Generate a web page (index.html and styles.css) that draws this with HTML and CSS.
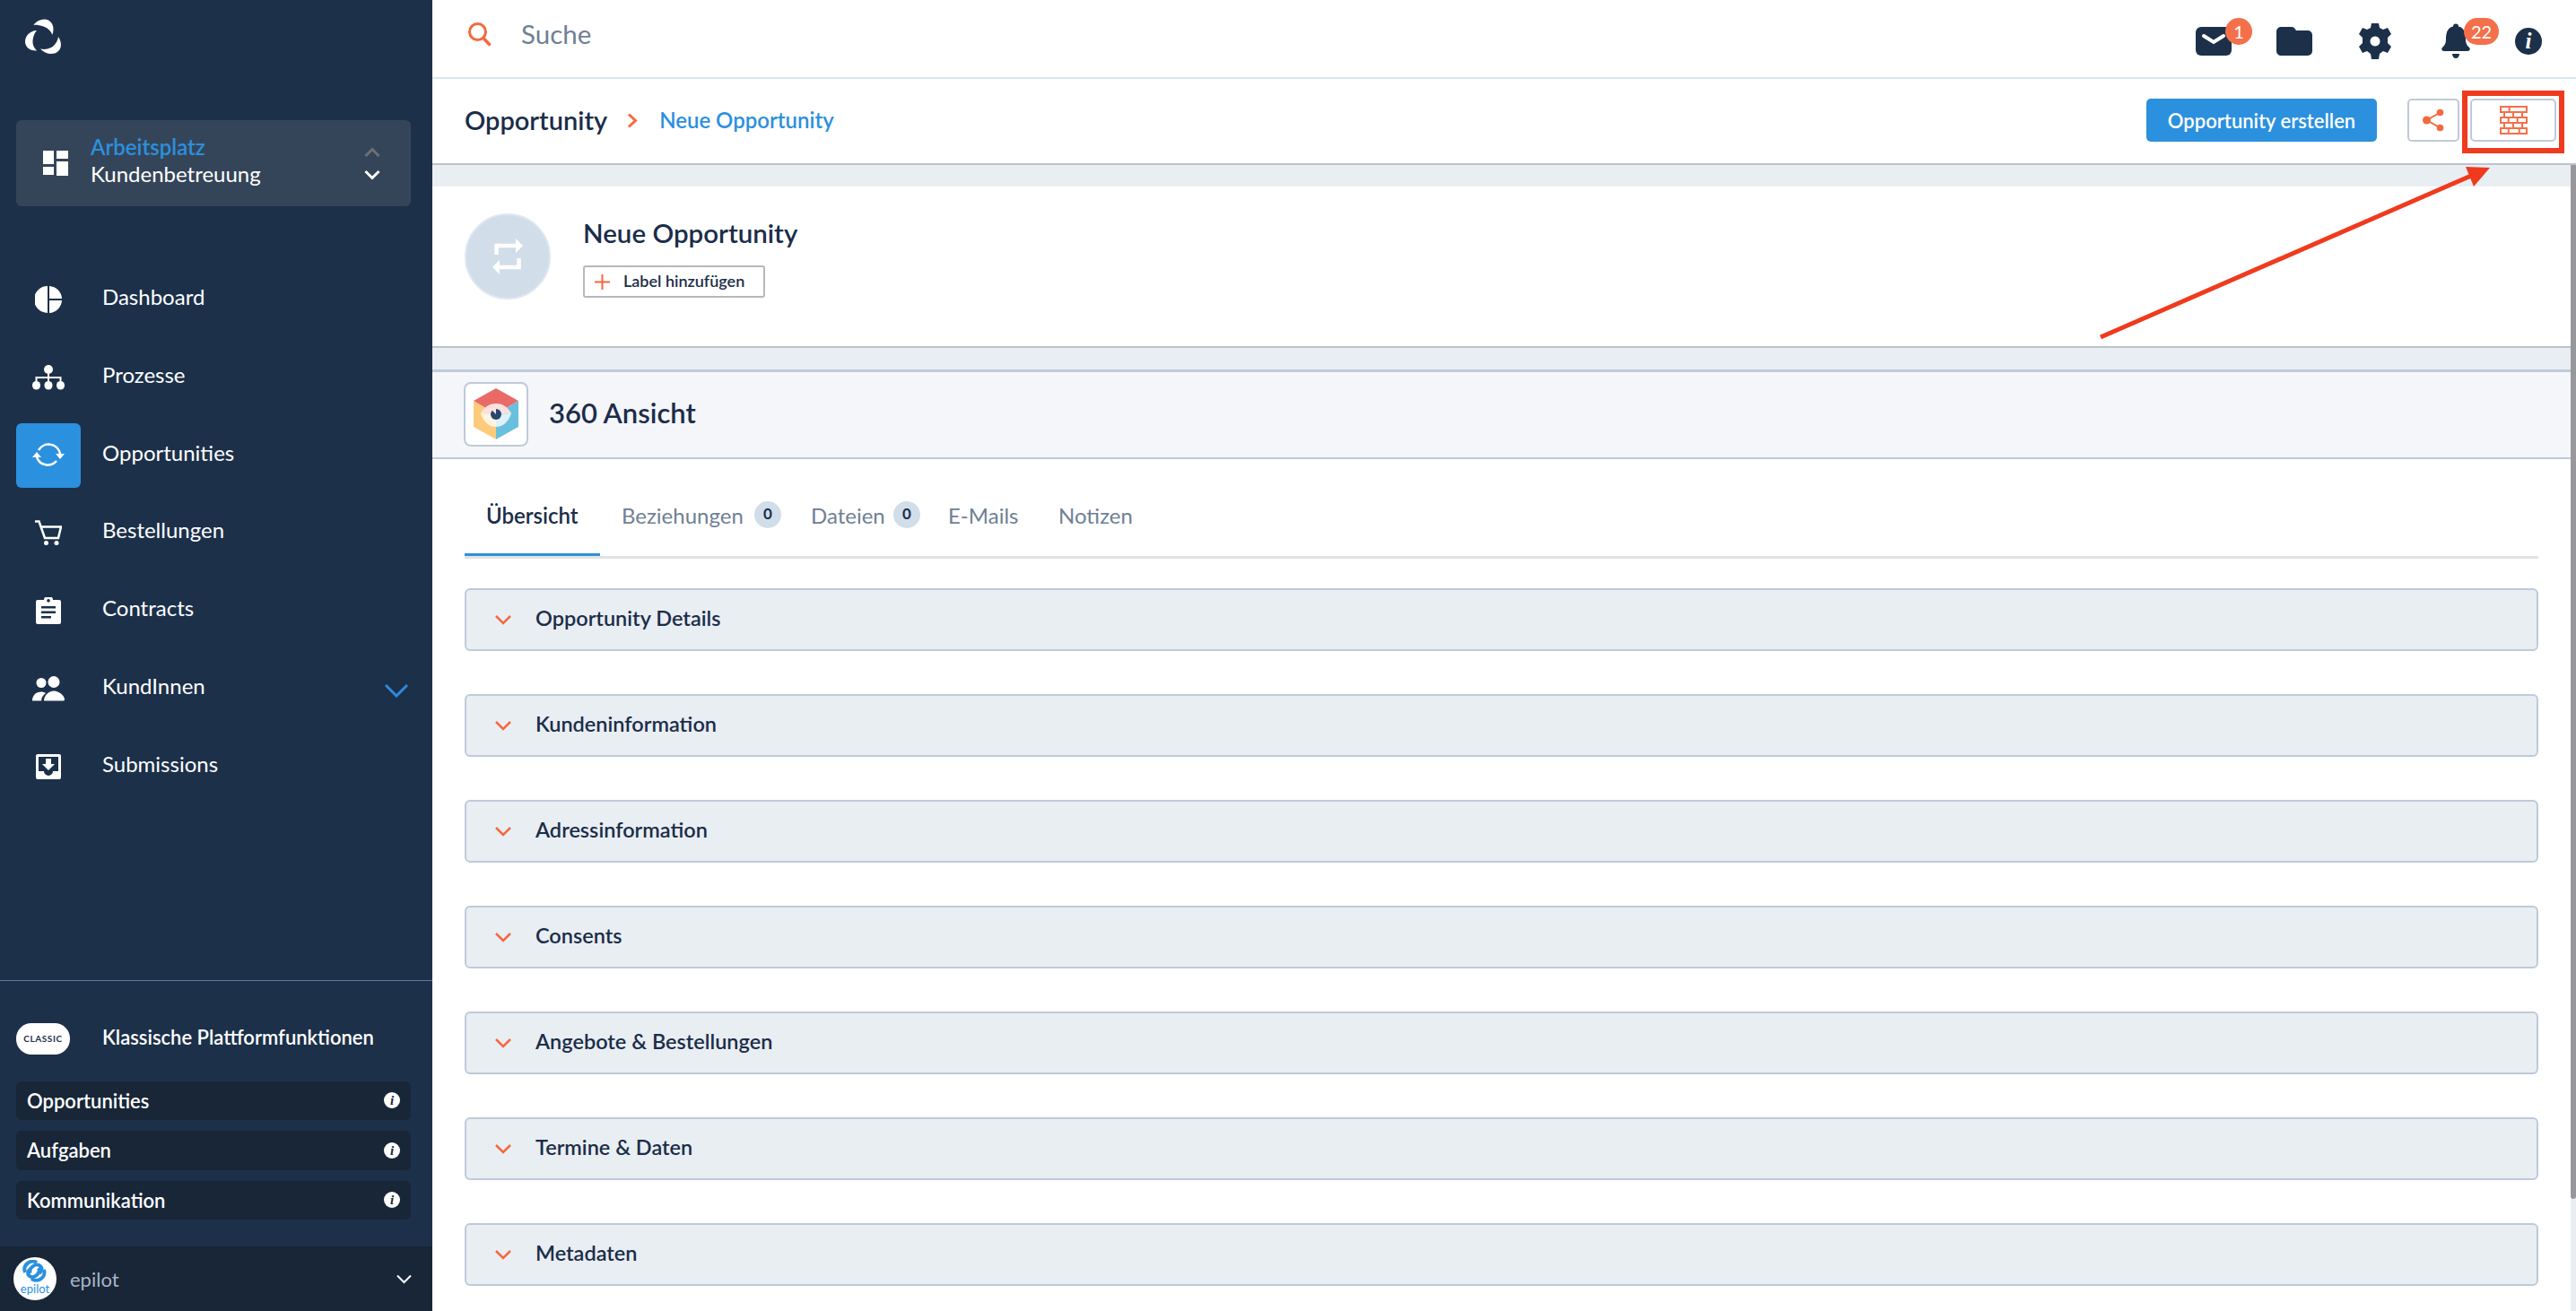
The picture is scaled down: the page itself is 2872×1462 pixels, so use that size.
FILE: index.html
```html
<!DOCTYPE html>
<html lang="de">
<head>
<meta charset="utf-8">
<title>Neue Opportunity</title>
<link rel="stylesheet" href="styles.css">
</head>
<body>
<div class="app">
  <aside class="sidebar">
    <div class="logo-area">
      <svg class="logo" width="42" height="40" viewBox="0 0 42 40"><g fill="#fff"><path d="M9.300 6.700C14 1 21-1 26 1.500C31 4 33 11 30.300 18C29 13.500 25 10 20.500 8.500C16.500 7 13 6.500 9.300 6.700Z"/><path d="M13 13C6 13.500.5 18 0 25C-.3 31 5 36 13 35.500C9.500 32 8 28 8.500 24C9 19.500 10.500 15.500 13 13Z"/><path d="M17 33.500C21 38 27 40 33 38.500C39 36.500 43 29 37 20C36 25.500 33 30 29 32C25 34 21 34.500 17 33.500Z"/></g></svg>
    </div>
    <div class="workspace">
      <svg class="ws-icon" width="28" height="28" viewBox="0 0 28 28"><path fill="#fff" d="M0 0h12v15H0zM15 0h13v9H15zM15 12h13v16H15zM0 18h12v9H0z"/></svg>
      <div class="ws-text"><div class="ws-title">Arbeitsplatz</div><div class="ws-sub">Kundenbetreuung</div></div>
      <div class="ws-carets">
        <svg width="18" height="12" viewBox="0 0 18 12"><path d="M1.500 10L9 2.500 16.500 10" fill="none" stroke="#6b7078" stroke-width="3"/></svg>
        <svg width="18" height="12" viewBox="0 0 18 12"><path d="M1.500 2L9 9.500 16.500 2" fill="none" stroke="#fff" stroke-width="3"/></svg>
      </div>
    </div>
    <nav class="nav">
      <a class="nav-item"><span class="nav-icon"><svg width="30" height="30" viewBox="0 0 30 30"><path fill="#fff" d="M14 0v30A15 15 0 0 1 14 0zM16 0a15 15 0 0 1 14 14H16zM16 16h14a15 15 0 0 1-14 14z"/></svg></span><span class="nav-label">Dashboard</span></a>
      <a class="nav-item"><span class="nav-icon"><svg width="36" height="28" viewBox="0 0 36 28"><g fill="#fff"><circle cx="18" cy="5" r="5"/><rect x="0" y="18" width="9" height="9.500" rx="4.500"/><rect x="13.500" y="18" width="9" height="9.500" rx="4.500"/><rect x="27" y="18" width="9" height="9.500" rx="4.500"/></g><path d="M18 8v10M4.500 18v-4h27v4" fill="none" stroke="#fff" stroke-width="2"/></svg></span><span class="nav-label">Prozesse</span></a>
      <a class="nav-item active"><span class="nav-icon"><svg width="36" height="30" viewBox="0 0 36 30"><g fill="none" stroke="#fff" stroke-width="2.500"><path d="M7 9A13 13 0 0 1 31 13"/><path d="M5 17A13 13 0 0 0 27 21"/></g><path fill="#fff" d="M5 11L0 17H10zM31 19L26 13H36z"/></svg></span><span class="nav-label">Opportunities</span></a>
      <a class="nav-item"><span class="nav-icon"><svg width="30" height="28" viewBox="0 0 30 28"><path d="M0 1.500h4.500L11 20h15l3-12.500H6" fill="none" stroke="#fff" stroke-width="2.500"/><circle cx="12.500" cy="25.500" r="2.500" fill="#fff"/><circle cx="24" cy="25.500" r="2.500" fill="#fff"/></svg></span><span class="nav-label">Bestellungen</span></a>
      <a class="nav-item"><span class="nav-icon"><svg width="28" height="30" viewBox="0 0 28 30"><path fill="#fff" fill-rule="evenodd" d="M2 3h7a5 5 0 0 1 10 0h7a2 2 0 0 1 2 2v23a2 2 0 0 1-2 2H2a2 2 0 0 1-2-2V5a2 2 0 0 1 2-2zM14 2a1.800 1.800 0 1 0 .01 0zM6 10v2.500h16V10zM6 15.500V18h16v-2.500zM6 21v2.500h11V21z"/></svg></span><span class="nav-label">Contracts</span></a>
      <a class="nav-item"><span class="nav-icon"><svg width="36" height="28" viewBox="0 0 36 28"><g fill="#fff"><circle cx="10" cy="7.500" r="5.500"/><circle cx="24" cy="6.500" r="6.500"/><path d="M0 27.500c0-6 4-10 10-10 2 0 3.500.5 5 1.500-3 2-5 5-5 8.500zM13 27.500c0-5.500 5-11 11-11s12 5.500 12 9.500c0 1-.7 1.500-2 1.500z"/></g></svg></span><span class="nav-label">KundInnen</span><svg class="nav-caret" width="26" height="16" viewBox="0 0 26 16"><path d="M1 2l12 12L25 2" fill="none" stroke="#2b8be0" stroke-width="3"/></svg></a>
      <a class="nav-item"><span class="nav-icon"><svg width="28" height="28" viewBox="0 0 28 28"><path fill="#fff" fill-rule="evenodd" d="M2 0h24a2 2 0 0 1 2 2v24a2 2 0 0 1-2 2H2a2 2 0 0 1-2-2V2a2 2 0 0 1 2-2zM3 3v16h6a5 5 0 0 0 10 0h6V3zM11 5h6v6h4l-7 7-7-7h4z"/></svg></span><span class="nav-label">Submissions</span></a>
    </nav>
    <div class="classic">
      <div class="classic-head"><span class="pill">CLASSIC</span><span class="classic-title">Klassische Plattformfunktionen</span></div>
      <div class="classic-rows">
        <div class="classic-row">Opportunities<span class="mini-info">i</span></div>
        <div class="classic-row">Aufgaben<span class="mini-info">i</span></div>
        <div class="classic-row">Kommunikation<span class="mini-info">i</span></div>
      </div>
      <div class="account">
        <span class="avatar"><svg width="30" height="26" viewBox="0 0 30 26"><g fill="none" stroke="#2b90de" stroke-width="4"><path d="M17 3a9 9 0 0 0-13 11"/><path d="M11 21a9 9 0 0 0 14-10"/><path d="M10 15c-3-5 6-13 11-8 3 3 1 6-1 8"/><path d="M19 9c3 5-5 13-10 9-3-2-2-6 1-8"/></g></svg><span class="avatar-text">epilot</span></span>
        <span class="account-name">epilot</span>
        <svg class="account-caret" width="17" height="11" viewBox="0 0 17 11"><path d="M1 1.500l7.500 7.500L16 1.500" fill="none" stroke="#fff" stroke-width="2"/></svg>
      </div>
    </div>
  </aside>
  <main class="main">
    <header class="topbar">
      <div class="search">
        <svg width="26" height="27" viewBox="0 0 26 27"><circle cx="10.500" cy="10.500" r="9" fill="none" stroke="#f4693f" stroke-width="3"/><path d="M16.500 17l8 8.500" stroke="#f4693f" stroke-width="3.500" fill="none"/></svg>
        <span class="search-text">Suche</span>
      </div>
      <div class="top-icons">
        <span class="ti ti-mail"><svg width="40" height="32" viewBox="0 0 40 32"><rect width="40" height="32" rx="6" fill="#1c304a"/><path d="M9 10l11 7 11-7" fill="none" stroke="#fff" stroke-width="4" stroke-linecap="round"/></svg><span class="badge badge-1">1</span></span>
        <span class="ti ti-folder"><svg width="40" height="32" viewBox="0 0 40 32"><path fill="#1c304a" d="M5 0h12c2 0 3 1 4 2.500L22 4h13a5 5 0 0 1 5 5v18a5 5 0 0 1-5 5H5a5 5 0 0 1-5-5V5a5 5 0 0 1 5-5z"/></svg></span>
        <span class="ti ti-gear"><svg width="40" height="40" viewBox="0 0 40 40"><path fill="#1c304a" fill-rule="evenodd" d="M16 0h8l1 5 4 2 5-2 4 7-4 4v6l4 4-4 7-5-2-4 3-1 5.900h-8l-1-5.900-4-3-5 2-4-7 4-4V16L2 12l4-7 5 2 4-2zM20 14.500a5.500 5.500 0 1 0 .01 0z"/></svg></span>
        <span class="ti ti-bell"><svg width="32" height="40" viewBox="0 0 32 40"><path fill="#1c304a" d="M13 3.500a3 3 0 0 1 6 0C26 5 27 12 27 18c0 5 2 7 4 9 1.500 1.500.8 4-2 4H3c-2.800 0-3.500-2.500-2-4 2-2 4-4 4-9 0-6 1-13 8-14.500zM12 34h8c0 3-2 5-4 5s-4-2-4-5z"/></svg><span class="badge badge-22">22</span></span>
        <span class="ti-info">i</span>
      </div>
    </header>
    <section class="crumbbar">
      <div class="crumbs">
        <span class="crumb-root">Opportunity</span>
        <svg width="12" height="17" viewBox="0 0 12 17"><path d="M2 1.500l7.500 7-7.500 7" fill="none" stroke="#f4693f" stroke-width="3"/></svg>
        <span class="crumb-leaf">Neue Opportunity</span>
      </div>
      <div class="actions">
        <button class="btn-primary">Opportunity erstellen</button>
        <button class="btn-share"><svg width="24" height="26" viewBox="0 0 24 26"><g fill="#f4693f"><circle cx="4.500" cy="13" r="4.500"/><circle cx="19.500" cy="4.500" r="3.800"/><circle cx="19.500" cy="21.500" r="3.800"/></g><path d="M19.500 4.500L4.500 13l15 8.500" fill="none" stroke="#f4693f" stroke-width="2"/></svg></button>
        <button class="btn-wall"><svg width="31" height="32" viewBox="-1 -1 31 32"><g fill="none" stroke="#f4704a" stroke-width="2"><path d="M0 0h29v6H0zM9.700 0v6"/><path d="M4 6h20v6H4zM14 6v6"/><path d="M0 12h29v6H0zM8.700 12v6M18.700 12v6"/><path d="M4 18h20v6H4zM14 18v6"/><path d="M0 24h29v6H0zM8.700 24v6M20.700 24v6"/></g></svg></button>
      </div>
    </section>
    <div class="band"></div>
    <section class="record">
      <span class="record-avatar"><svg width="36" height="42" viewBox="0 0 36 42"><g fill="none" stroke="#fff" stroke-width="4.500"><path d="M5.500 19V9H27"/><path d="M30.500 23V33H9"/></g><path fill="#fff" d="M27 1L35 9 27 17zM9 25L1 33 9 41z"/></svg></span>
      <div class="record-body">
        <h1 class="record-title">Neue Opportunity</h1>
        <button class="btn-label"><svg width="17" height="17" viewBox="0 0 17 17"><path d="M8.500 0v17M0 8.500h17" stroke="#f4693f" stroke-width="2"/></svg><span>Label hinzufügen</span></button>
      </div>
    </section>
    <div class="band band-2"></div>
    <section class="view-head">
      <span class="view-icon"><svg width="50" height="57" viewBox="0 0 50 57"><path fill="#ea6a68" d="M25 0l25 14-25 15L0 14z"/><path fill="#fdcb7c" d="M0 14l25 15v28L0 43z"/><path fill="#68c1dc" d="M50 14L25 29v28l25-14z"/><path fill="#fde0df" d="M8 28c4-8 11-11 17-11s13 3 17 11l-17 1z"/><path fill="#fff4e2" d="M8 28l17 1v14c-8 0-14-6-17-15z"/><path fill="#def1f7" d="M42 28l-17 1v14c8 0 14-6 17-15z"/><circle cx="25" cy="29" r="6" fill="#28476f"/><path d="M19 23h6v6z" fill="#fde0df"/></svg></span>
      <h2 class="view-title">360 Ansicht</h2>
    </section>
    <section class="content">
      <div class="tabs">
        <span class="tab tab-active">Übersicht</span>
        <span class="tab tab-b">Beziehungen<span class="count">0</span></span>
        <span class="tab tab-d">Dateien<span class="count">0</span></span>
        <span class="tab tab-e">E-Mails</span>
        <span class="tab tab-n">Notizen</span>
      </div>
      <div class="accordions">
        <div class="acc"><svg width="18" height="11" viewBox="0 0 18 11"><path d="M1 1l8 8 8-8" fill="none" stroke="#f4693f" stroke-width="2.500"/></svg><span>Opportunity Details</span></div>
        <div class="acc"><svg width="18" height="11" viewBox="0 0 18 11"><path d="M1 1l8 8 8-8" fill="none" stroke="#f4693f" stroke-width="2.500"/></svg><span>Kundeninformation</span></div>
        <div class="acc"><svg width="18" height="11" viewBox="0 0 18 11"><path d="M1 1l8 8 8-8" fill="none" stroke="#f4693f" stroke-width="2.500"/></svg><span>Adressinformation</span></div>
        <div class="acc"><svg width="18" height="11" viewBox="0 0 18 11"><path d="M1 1l8 8 8-8" fill="none" stroke="#f4693f" stroke-width="2.500"/></svg><span>Consents</span></div>
        <div class="acc"><svg width="18" height="11" viewBox="0 0 18 11"><path d="M1 1l8 8 8-8" fill="none" stroke="#f4693f" stroke-width="2.500"/></svg><span>Angebote &amp; Bestellungen</span></div>
        <div class="acc"><svg width="18" height="11" viewBox="0 0 18 11"><path d="M1 1l8 8 8-8" fill="none" stroke="#f4693f" stroke-width="2.500"/></svg><span>Termine &amp; Daten</span></div>
        <div class="acc"><svg width="18" height="11" viewBox="0 0 18 11"><path d="M1 1l8 8 8-8" fill="none" stroke="#f4693f" stroke-width="2.500"/></svg><span>Metadaten</span></div>
      </div>
    </section>
    <div class="scroll-track"><div class="scroll-thumb"></div></div>
  </main>
  <div class="callout-box"></div>
  <svg class="callout-arrow" width="460" height="200" viewBox="0 0 460 200"><path d="M12 196L425 16" stroke="#f03a1e" stroke-width="5" fill="none"/><path d="M446 7L419 6 428 28z" fill="#f03a1e"/></svg>
</div>
</body>
</html>
```
FILE: styles.css
```css
* { box-sizing: border-box; }
html, body { margin: 0; height: 100%; overflow: hidden; }
body { font-family: "Lato", "Liberation Sans", sans-serif; background: #fff; color: #1b2d49; }
h1, h2 { margin: 0; }
button { font-family: inherit; padding: 0; cursor: pointer; }
.app { position: relative; display: flex; width: 2872px; height: 1462px; overflow: hidden; }

/* Sidebar */
.sidebar { width: 482px; flex: none; background: #1c304a; color: #fff; display: flex; flex-direction: column; }
.logo-area { height: 134px; padding: 21px 0 0 28px; }
.logo { display: block; overflow: visible; }
.workspace { margin: 0 24px 0 18px; height: 96px; background: #354559; border-radius: 6px; display: flex; align-items: center; padding: 0 34px 0 30px; }
.ws-text { margin: -6px 0 0 25px; flex: 1; }
.ws-title { color: #2b90de; font-size: 24px; font-weight: 600; line-height: 30px; }
.ws-sub { font-size: 24px; line-height: 30px; }
.ws-carets { display: flex; flex-direction: column; gap: 13px; }
.ws-carets svg { display: block; }
.nav { margin-top: 68px; display: flex; flex-direction: column; gap: 14.8px; }
.nav-item { display: flex; align-items: center; height: 72px; position: relative; }
.nav-icon { width: 72px; height: 72px; margin-left: 18px; display: flex; align-items: center; justify-content: center; border-radius: 6px; flex: none; }
.nav-item.active .nav-icon { background: #2b90de; }
.nav-label { margin-left: 24px; font-size: 24px; padding-bottom: 7px; }
.nav-caret { position: absolute; left: 429px; top: 30px; }
.classic { margin-top: auto; border-top: 1px solid #66789a; }
.classic-head { display: flex; align-items: center; padding: 47px 0 0 18px; }
.pill { width: 60px; height: 35px; background: #fff; color: #1c304a; border-radius: 17px; font-size: 10px; font-weight: 700; letter-spacing: .6px; display: flex; align-items: center; justify-content: center; }
.classic-title { margin-left: 36px; font-size: 22px; font-weight: 600; padding-bottom: 4px; }
.classic-rows { margin: 30px 24px 0 18px; display: flex; flex-direction: column; gap: 12px; }
.classic-row { height: 43.5px; background: #182638; border-radius: 6px; padding: 0 12px; display: flex; align-items: center; justify-content: space-between; font-size: 22px; font-weight: 600; }
.mini-info { width: 18px; height: 18px; border-radius: 50%; background: #fff; color: #182638; font: italic 700 15px/18px "Liberation Serif", serif; text-align: center; }
.account { margin-top: 30px; height: 72px; background: #182638; display: flex; align-items: center; padding-left: 15px; position: relative; }
.avatar { width: 48px; height: 48px; border-radius: 50%; background: #fff; display: flex; flex-direction: column; align-items: center; padding-top: 3px; flex: none; }
.avatar svg { display: block; }
.avatar-text { color: #2b90de; font-size: 13px; line-height: 13px; }
.account-name { margin-left: 15px; color: #a7b5c6; font-size: 22px; }
.account-caret { position: absolute; left: 442px; top: 31px; }

/* Main */
.main { flex: 1; position: relative; min-width: 0; display: flex; flex-direction: column; }
.topbar { height: 88px; flex: none; border-bottom: 2px solid #dbe6f2; display: flex; justify-content: space-between; padding: 0 38px 0 40px; }
.search { display: flex; align-items: center; height: 76px; }
.search-text { margin-left: 33px; color: #6f8094; font-size: 29.5px; padding-bottom: 2px; }
.top-icons { display: flex; align-items: center; height: 86px; padding-top: 6px; }
.ti { position: relative; height: 40px; display: flex; align-items: center; }
.ti svg { display: block; }
.ti-folder { margin-left: 50px; }
.ti-gear { margin-left: 50px; }
.ti-bell { margin-left: 54px; }
.ti-info { margin-left: 50px; width: 30px; height: 30px; border-radius: 50%; background: #1c304a; color: #fff; font: italic 700 25px/30px "Liberation Serif", serif; text-align: center; }
.badge { position: absolute; top: -6px; height: 30px; background: #f4704a; color: #fff; font-size: 20px; line-height: 30px; text-align: center; border-radius: 15px; }
.badge-1 { left: 33px; width: 30px; }
.badge-22 { left: 25px; width: 39px; }

.crumbbar { height: 96px; flex: none; border-bottom: 2px solid #bcc3cc; display: flex; justify-content: space-between; align-items: center; padding: 0 22px 2px 36px; }
.crumbs { display: flex; align-items: center; }
.crumb-root { font-size: 29px; font-weight: 600; padding-bottom: 2px; }
.crumbs svg { margin: 0 24px 0 22px; }
.crumb-leaf { color: #2b90de; font-size: 24px; font-weight: 600; padding-bottom: 2px; }
.actions { display: flex; align-items: center; height: 48px; }
.btn-primary { width: 257px; height: 48px; border: 0; border-radius: 5px; background: #2b90de; color: #fff; font-size: 22px; font-weight: 600; }
.btn-share { width: 58px; height: 48px; margin-left: 34px; background: #fff; border: 2px solid #bfcad9; border-radius: 5px; display: flex; align-items: center; justify-content: center; }
.btn-wall { width: 96px; height: 48px; margin-left: 12px; background: #fff; border: 2px solid #bfcad9; border-radius: 5px; display: flex; align-items: center; justify-content: center; }
.band { height: 24px; flex: none; background: #e9eef3; }
.band-2 { border-top: 2px solid #bcc3cc; border-bottom: 3px solid #bfcad9; height: 29px; }
.record { height: 178px; flex: none; padding: 30px 0 0 36px; display: flex; }
.record-avatar { width: 96px; height: 96px; border-radius: 50%; background: #d1dde9; border: 2px solid #dfe7f1; display: flex; align-items: center; justify-content: center; }
.record-body { margin-left: 36px; }
.record-title { font-size: 29.5px; font-weight: 600; line-height: 40px; margin-top: 2px; }
.btn-label { margin-top: 16px; width: 203px; height: 36px; border: 2px solid #b8b8b8; border-radius: 3px; background: #fff; color: #1b2d49; display: flex; align-items: center; padding-left: 11px; font-size: 18px; font-weight: 600; }
.btn-label span { margin-left: 15px; padding-bottom: 2px; }
.view-head { height: 97px; flex: none; background: #f4f6fa; border-bottom: 2px solid #bfcad9; display: flex; align-items: center; padding-left: 35px; }
.view-icon { width: 72px; height: 72px; background: #fff; border: 2px solid #bfcad9; border-radius: 8px; display: flex; align-items: center; justify-content: center; margin-top: -2px; }
.view-title { margin: -5px 0 0 23px; font-size: 31px; font-weight: 600; }
.content { padding: 0 42px 0 36px; }
.tabs { height: 111px; border-bottom: 3px solid #e0e2e4; display: flex; position: relative; }
.tab { font-size: 24px; color: #6f8094; height: 108px; padding-top: 48px; display: block; position: relative; }
.tab-active { width: 151px; padding-left: 24px; color: #1b2d49; font-weight: 600; border-bottom: 3px solid #2b90de; }
.tab-b { margin-left: 24px; width: 178px; }
.tab-d { margin-left: 33px; width: 153px; }
.tab-e { width: 123px; }
.count { position: absolute; top: 47px; width: 30px; height: 30px; border-radius: 50%; background: #d1dde9; color: #1b2d49; font-size: 17px; font-weight: 700; line-height: 28px; text-align: center; }
.tab-b .count { left: 148px; }
.tab-d .count { left: 92px; }
.accordions { margin-top: 33px; display: flex; flex-direction: column; gap: 48px; }
.acc { height: 70px; background: #e9eef3; border: 2px solid #bfcad9; border-radius: 6px; display: flex; align-items: center; padding: 0 0 2px 32px; font-size: 23.5px; font-weight: 600; }
.acc svg { margin-top: 3px; }
.acc span { margin: -2px 0 0 27px; }
.scroll-track { position: absolute; right: 0; top: 184px; bottom: 0; width: 6px; background: #e9eef3; }
.scroll-thumb { height: 1153px; background: #98989c; border-radius: 0 0 3px 3px; }

/* Annotation overlays */
.callout-box { position: absolute; left: 2745px; top: 101px; width: 114px; height: 70px; border: 6px solid #f03a1e; }
.callout-arrow { position: absolute; left: 2330px; top: 180px; }
```
